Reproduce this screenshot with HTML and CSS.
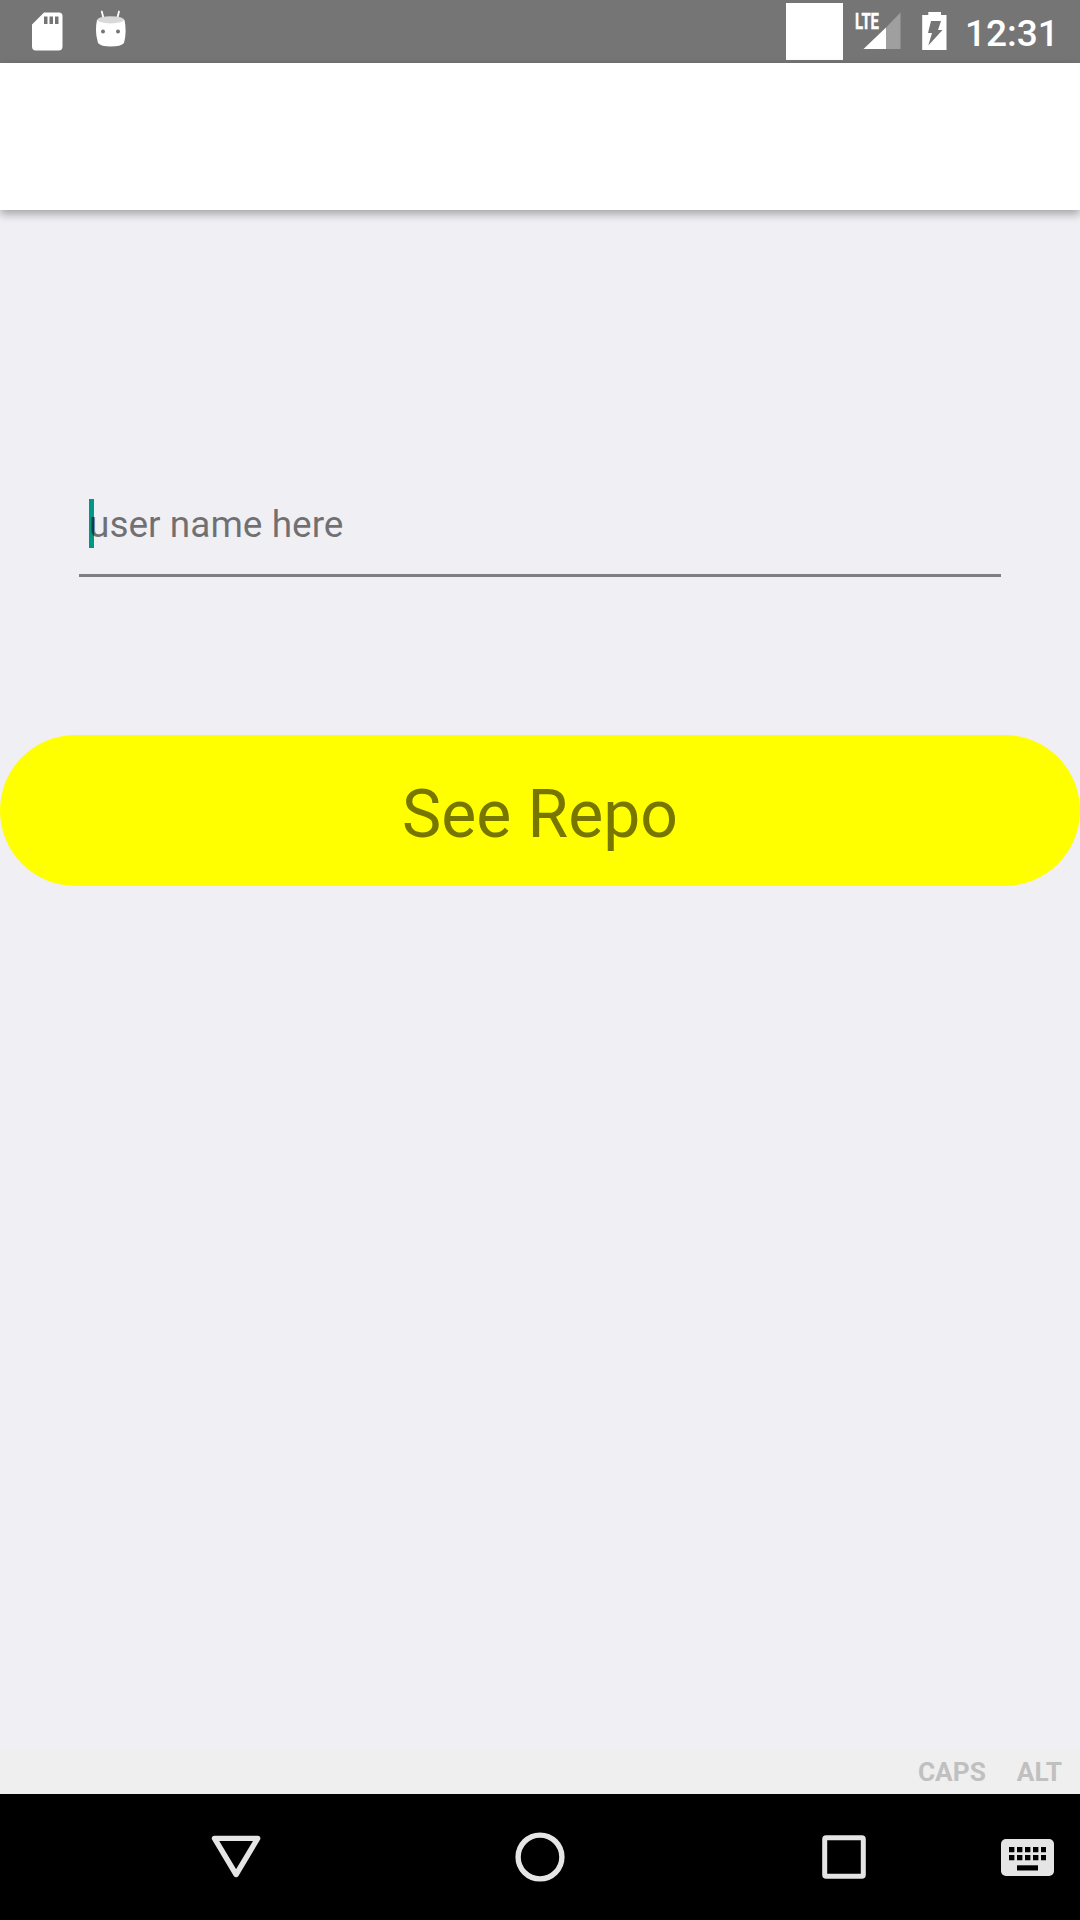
FILE: index.html
```html
<!DOCTYPE html>
<html lang="en">
<head>
<meta charset="utf-8">
<title>See Repo</title>
<link rel="stylesheet" href="styles.css">
</head>
<body>
<div class="screen">
  <header class="status-bar">
    <div class="notifications">
      <svg class="sd-card" width="32" height="40" viewBox="0 0 32 40">
        <path fill="#fff" fill-rule="evenodd" d="M12 .500H27a3.500 3.500 0 0 1 3.500 3.500v30.500a4 4 0 0 1-4 4H4a4 4 0 0 1-4-4V12.500zM12 4.500v7.500h3.500V4.500zM17.500 4.500v7.500h3.500V4.500zM23 4.500v7.500h3.500V4.500z"/>
      </svg>
      <svg class="robot" width="32" height="38" viewBox="0 0 32 38">
        <path d="M6.800 1.500l2 8M24 1.500l-2 8" stroke="#fff" stroke-width="1.800" stroke-linecap="round"/>
        <path fill="#fff" d="M2 10Q16 5 29.500 10Q32 22 29 33Q26 36.500 15.500 36.500Q6 36.500 3 33Q-.500 22 2 10z"/>
        <ellipse cx="15.700" cy="9.800" rx="13.300" ry="3.600" fill="#d9d9d9"/>
        <circle cx="8" cy="21.500" r="2" fill="#757575"/>
        <circle cx="23" cy="21.500" r="2" fill="#757575"/>
      </svg>
    </div>
    <div class="system">
      <span class="blank-icon"></span>
      <svg class="signal" width="46" height="40" viewBox="0 0 46 40">
        <text class="lte" x="0" y="19" textLength="24" lengthAdjust="spacingAndGlyphs">LTE</text>
        <path fill="#9f9f9f" d="M31 17.500L45.500 2.500V39H31z"/>
        <path fill="#fff" d="M31 17.500V39H8.500z"/>
      </svg>
      <svg class="battery" width="26" height="40" viewBox="0 0 26 40">
        <path fill="#fff" fill-rule="evenodd" d="M6.300 2H19v3h5.500v35H.200V5h6.100zM9 11L6 23h4L6.300 35.500 20.500 20h-4.500l3-9z"/>
      </svg>
      <span class="clock">12:31</span>
    </div>
  </header>
  <div class="app-bar"></div>
  <main class="content">
    <label class="field"><span class="hint">user name here</span></label>
    <button class="repo-button" type="button">See Repo</button>
  </main>
  <div class="key-state"><span>CAPS</span><span>ALT</span></div>
  <nav class="nav-bar">
    <svg class="nav-icon" width="56" height="56" viewBox="0 0 56 56">
      <path d="M6.500 9.400H49.700L28.100 45.500z" fill="none" stroke="#e5e5e5" stroke-width="5.400" stroke-linejoin="round"/>
    </svg>
    <svg class="nav-icon" width="56" height="56" viewBox="0 0 56 56">
      <circle cx="28" cy="28" r="21.900" fill="none" stroke="#e5e5e5" stroke-width="5.400"/>
    </svg>
    <svg class="nav-icon" width="56" height="56" viewBox="0 0 56 56">
      <rect x="8.700" y="8.700" width="38.600" height="38.600" rx="1.500" fill="none" stroke="#e5e5e5" stroke-width="5"/>
    </svg>
    <svg class="keyboard" width="53" height="37" viewBox="0 0 53 37">
      <rect width="53" height="37" rx="5" fill="#e5e5e5"/>
      <path d="M8 10.600h37M8 18.600h37" stroke="#000" stroke-width="5.200" stroke-dasharray="5.400 2.600"/>
      <path d="M16 26.300h21v5.200H16z"/>
    </svg>
  </nav>
</div>
</body>
</html>
```

FILE: styles.css
```css
* {
  box-sizing: border-box;
}

body {
  margin: 0;
  font-family: Roboto, sans-serif;
}

.screen {
  display: flex;
  flex-direction: column;
  width: 1080px;
  height: 1920px;
  overflow: hidden;
  background: #efeff4;
}

.status-bar {
  display: flex;
  justify-content: space-between;
  height: 63px;
  padding: 0 24px 0 32px;
  background: #757575;
}

.notifications,
.system {
  display: flex;
  align-items: flex-start;
}

.notifications {
  gap: 31px;
}

.sd-card {
  margin-top: 12px;
}

.robot {
  margin-top: 10px;
}

.blank-icon {
  width: 57px;
  height: 57px;
  margin: 3px 12px 0 0;
  background: #fff;
}

.signal {
  margin: 10px 21px 0 0;
}

.lte {
  fill: #fff;
  stroke: #fff;
  stroke-width: 0.4px;
  font-size: 21.5px;
  font-weight: 700;
}

.battery {
  margin: 10px 18px 0 0;
}

.clock {
  width: 90px;
  font-size: 37px;
  font-weight: 500;
  line-height: 43px;
  margin-top: 12px;
  text-indent: -1px;
  color: #fff;
}

.app-bar {
  flex: none;
  height: 147px;
  background: #fff;
  box-shadow: 0 4px 9px rgba(0, 0, 0, 0.32);
}

.content {
  flex: 1;
}

.field {
  display: block;
  height: 88px;
  margin: 279px 79px 158px;
  padding: 10px 10px 0;
  border-bottom: 3px solid #808080;
}

.hint {
  display: block;
  height: 49px;
  border-left: 5px solid #009788;
  color: rgba(0, 0, 0, 0.54);
  font-size: 37px;
  line-height: 52px;
  text-indent: -5px;
}

.repo-button {
  display: block;
  width: 100%;
  height: 151px;
  padding: 8px 0 0;
  border: 0;
  border-radius: 76px;
  background: #ff0;
  color: #777700;
  font-family: inherit;
  font-size: 66px;
  line-height: 77px;
}

.key-state {
  display: flex;
  justify-content: flex-end;
  gap: 31px;
  height: 45px;
  padding: 0 18px;
  background: #efefef;
  color: #c0c0c0;
  font-size: 26.25px;
  font-weight: 700;
  line-height: 46px;
}

.nav-bar {
  display: flex;
  align-items: center;
  gap: 248px;
  height: 126px;
  padding-left: 208px;
  background: #000;
}

.keyboard {
  margin-left: -119px;
}
```
